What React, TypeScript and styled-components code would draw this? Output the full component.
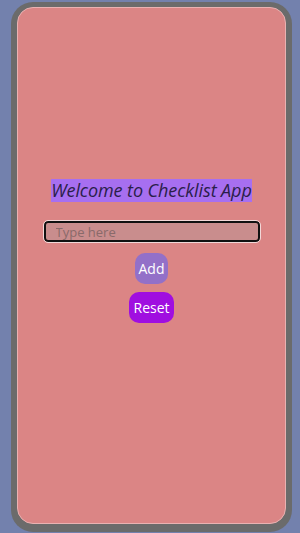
import styled, { createGlobalStyle } from "styled-components";

const GlobalStyle = createGlobalStyle`
    html, body {
        margin: 0;
        padding: 0;
        background: #7381ad;
    }
    body {
        font-family: "Noto Sans", "Open Sans", sans-serif;
    }
`;

export default function App() {
    return (
        <>
            <GlobalStyle/>
            <StyledPage>
                <StyledPhone>
                    <StyledScreen>
                        <StyledTitle>Welcome to Checklist App</StyledTitle>
                        <StyledInput placeholder="Type here" autoFocus/>
                        <StyledButton $color="#9370c8" $top={11}>Add</StyledButton>
                        <StyledButton $color="#a00ee0" $top={8}>Reset</StyledButton>
                    </StyledScreen>
                </StyledPhone>
            </StyledPage>
        </>
    );
}

const StyledPage = styled.div`
    width: 300px;
    height: 533px;
    padding: 2px 8px 1px 11px;
    box-sizing: border-box;
`;

const StyledPhone = styled.div`
    width: 281px;
    height: 530px;
    box-sizing: border-box;
    background: #6b6b6b;
    border-radius: 22px;
    padding: 5px 6px 8px 6px;
`;

const StyledScreen = styled.div`
    height: 100%;
    box-sizing: border-box;
    background: #db8585;
    border: 1px solid #e9b2b2;
    border-radius: 16px;
    display: flex;
    flex-direction: column;
    align-items: center;
    padding-top: 171px;
`;

const StyledTitle = styled.h1`
    margin: 0;
    font-family: "Open Sans", "Noto Sans", sans-serif;
    font-style: italic;
    font-weight: 400;
    font-size: 18px;
    line-height: 23px;
    letter-spacing: -0.08px;
    color: #2a1e4a;
    background: #a76ff0;
`;

const StyledInput = styled.input`
    margin-top: 19px;
    width: 216px;
    height: 21px;
    box-sizing: border-box;
    background: #c98d8d;
    border: 2px solid #111;
    border-radius: 4px;
    outline: 1px solid #f2d8d8;
    padding: 0 10px;
    font-family: "Open Sans", "Noto Sans", sans-serif;
    font-size: 13px;
    color: #333;

    &::placeholder {
        color: #8a6a6a;
    }
`;

const StyledButton = styled.button<{ $color: string; $top: number }>`
    margin-top: ${p => p.$top}px;
    height: 31px;
    padding: 0 4px;
    border: none;
    border-radius: 10px;
    background: ${p => p.$color};
    color: #fff;
    font-family: "Open Sans", "Noto Sans", sans-serif;
    font-size: 14px;
`;
